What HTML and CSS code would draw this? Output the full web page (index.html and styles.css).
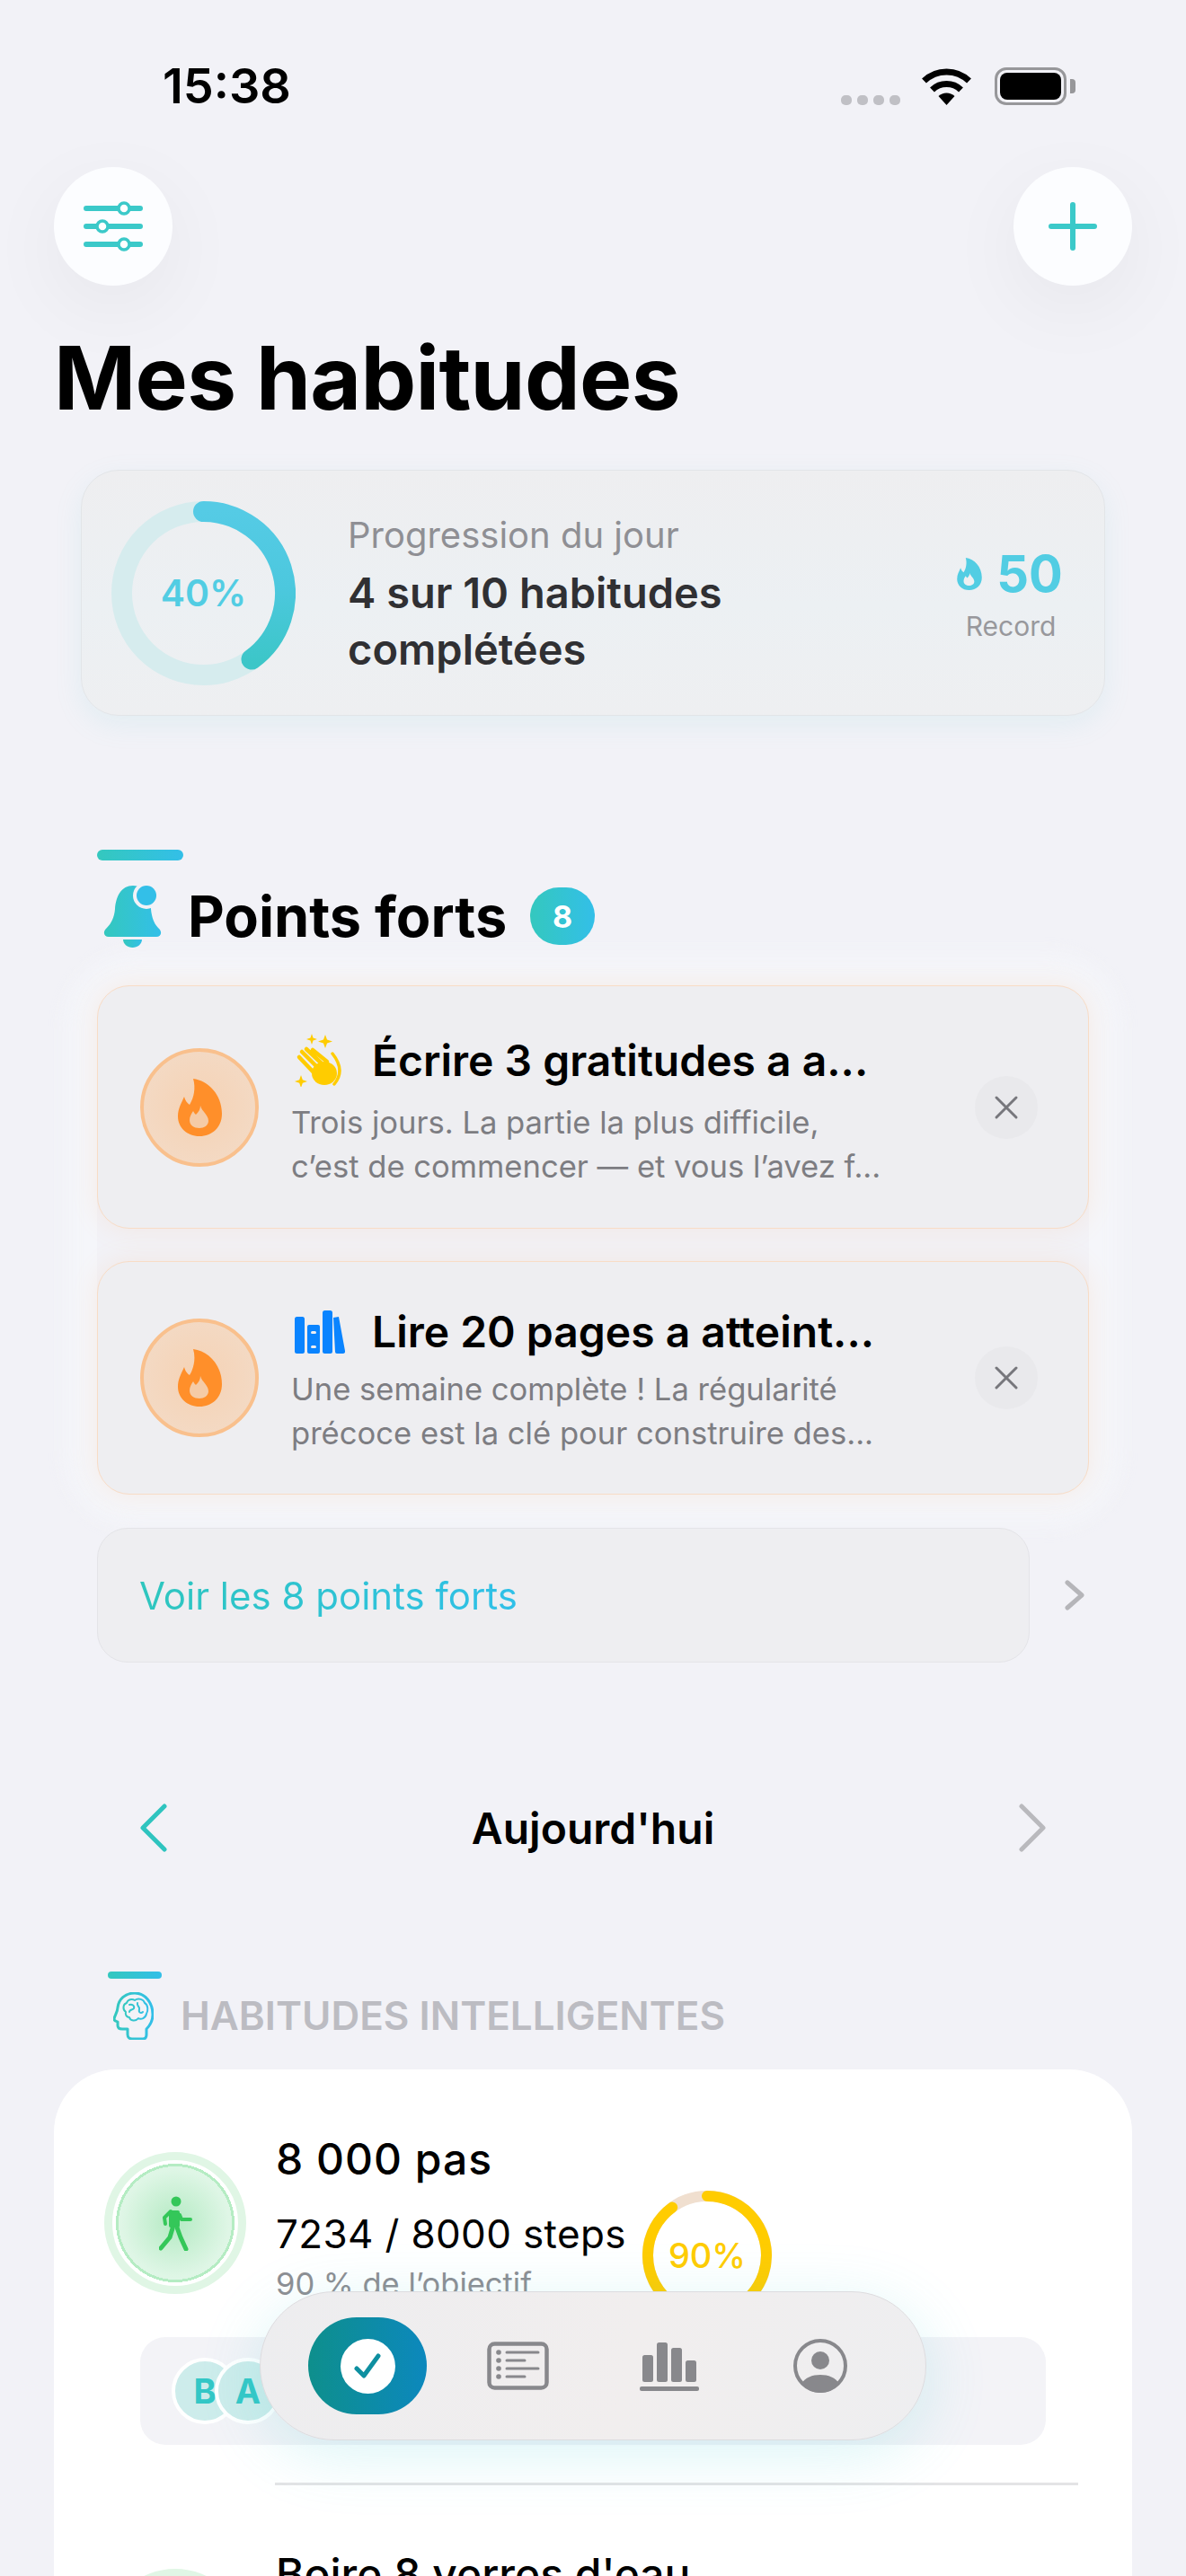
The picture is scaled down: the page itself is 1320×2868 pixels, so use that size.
FILE: index.html
```html
<!doctype html>
<html lang="fr">
<head>
    <meta charset="UTF-8">
    <title>Mes habitudes</title>
    <link rel="stylesheet" href="styles.css">
</head>
<body>
<svg class="defs" width="0" height="0">
    <defs>
        <linearGradient id="tealBlue" x1="0" y1="0" x2="1" y2="0">
            <stop offset="0" stop-color="#34c8be"/>
            <stop offset="1" stop-color="#33bfe8"/>
        </linearGradient>
        <linearGradient id="ringGrad" gradientUnits="userSpaceOnUse" x1="0" y1="10" x2="0" y2="180">
            <stop offset="0" stop-color="#55cbe5"/>
            <stop offset="0.5" stop-color="#4cc8de"/>
            <stop offset="1" stop-color="#3cc6c8"/>
        </linearGradient>
        <symbol id="flame" viewBox="0 0 49 64">
            <path fill="currentColor" d="M17 0C34 2 49 18 49 39C49 54 38 64 24 64C10 64 0 54 0 42C0 33 4 27 7 20C8 24 10 27 13 29C18 21 20 10 17 0Z"/>
            <path fill="var(--flame-in)" d="M25 30C27 37 34 40 34 47C34 52 29 55 24 55C18 55 13 52 13 46C13 42 15 39 17 36C18 38 19 39 20 40C23 37 25 34 25 30Z"/>
        </symbol>
    </defs>
</svg>

<div class="status">
    <span class="time">15:38</span>
    <div class="status-icons">
        <div class="signal"><i></i><i></i><i></i><i></i></div>
        <svg class="wifi" width="57" height="41" viewBox="0 0 57 41">
            <path d="M3.500 14A36 36 0 0 1 53.500 14" fill="none" stroke="#000" stroke-width="7"/>
            <path d="M12.500 24A23 23 0 0 1 44.500 24" fill="none" stroke="#000" stroke-width="7"/>
            <path d="M28.500 41L19.500 31A13 13 0 0 1 37.500 31Z"/>
        </svg>
        <div class="battery"><div class="battery-fill"></div></div>
    </div>
</div>

<div class="topbar">
    <button class="round-btn">
        <svg width="66" height="56" viewBox="0 0 66 56" fill="none" stroke="#3bc9c9">
            <g stroke-width="6" stroke-linecap="round">
                <path d="M3 8H63M3 28H63M3 48H63"/>
            </g>
            <g fill="#fff" stroke-width="3.500">
                <circle cx="45" cy="8" r="6"/>
                <circle cx="21" cy="28" r="6"/>
                <circle cx="45" cy="48" r="6"/>
            </g>
        </svg>
    </button>
    <button class="round-btn">
        <svg width="54" height="54" viewBox="0 0 54 54" fill="none" stroke="#3bc9c9" stroke-width="6" stroke-linecap="round">
            <path d="M27 3V51M3 27H51"/>
        </svg>
    </button>
</div>

<h1 class="page-title">Mes habitudes</h1>

<div class="progress-card">
    <div class="ring">
        <svg width="205" height="205" viewBox="0 0 205 205" fill="none">
            <circle cx="102.500" cy="102.500" r="91" stroke="#d6ecee" stroke-width="23"/>
            <path d="M102.500 11.500A91 91 0 0 1 156 176.100" stroke="url(#ringGrad)" stroke-width="23" stroke-linecap="round"/>
        </svg>
        <span class="ring-label">40%</span>
    </div>
    <div class="progress-text">
        <div class="progress-sub">Progression du jour</div>
        <div class="progress-main">4 sur 10 habitudes<br>complétées</div>
    </div>
    <div class="record">
        <div class="record-value">
            <svg class="record-flame" width="28" height="36"><use href="#flame"/></svg>
            <span>50</span>
        </div>
        <div class="record-label">Record</div>
    </div>
</div>

<section class="highlights">
    <div class="accent-bar"></div>
    <div class="hl-head">
        <svg width="65" height="70" viewBox="0 0 65 70">
            <path fill="url(#tealBlue)" d="M33 1C20 1 14 13 13 27C12 38 8 44 3 49C-1 53 1 58 6 58H59C64 58 66 53 62 49C57 44 54 38 53 27C52 13 46 1 33 1Z"/>
            <path fill="url(#tealBlue)" d="M22 61H43C43 66 38 70 32.500 70C27 70 22 66 22 61Z"/>
            <circle cx="48" cy="12" r="15" fill="#f2f2f7"/>
            <circle cx="48" cy="12" r="11" fill="#33bfe8"/>
        </svg>
        <h2 class="hl-title">Points forts</h2>
        <span class="count-badge">8</span>
    </div>

    <div class="hl-list">
        <div class="hl-card hl-card-first">
            <div class="flame-badge"><svg width="49" height="64"><use href="#flame"/></svg></div>
            <div class="hl-text">
                <div class="hl-card-head">
                    <svg width="56" height="59" viewBox="0 0 56 59" fill="none">
                        <g fill="#ffcc00">
                            <path d="M19 0L20.500 4.500L25 6L20.500 7.500L19 12L17.500 7.500L13 6L17.500 4.500Z"/>
                            <path d="M34 1L36 6.500L42 8.500L36 10.500L34 16L32 10.500L26 8.500L32 6.500Z"/>
                            <path d="M7 46L8.800 51.200L14 53L8.800 54.800L7 60L5.200 54.800L0 53L5.200 51.200Z"/>
                            <ellipse cx="33" cy="44" rx="14" ry="13"/>
                        </g>
                        <g stroke="#ffcc00" stroke-width="4.500" stroke-linecap="round">
                            <path d="M5 26L22 44M8 20L26 38M13 17L31 34M20 18L36 31"/>
                        </g>
                        <path d="M42 22C50 32 54 44 44 56" stroke="#ffcc00" stroke-width="3.500" stroke-linecap="round"/>
                    </svg>
                    <span class="hl-name">Écrire 3 gratitudes a a...</span>
                </div>
                <div class="hl-desc">Trois jours. La partie la plus difficile,<br>c’est de commencer — et vous l’avez f...</div>
            </div>
            <div class="close-btn">
                <svg width="28" height="28" viewBox="0 0 28 28" stroke="#77777c" stroke-width="3" stroke-linecap="round"><path d="M3 3L25 25M25 3L3 25"/></svg>
            </div>
        </div>

        <div class="hl-card hl-card-second">
            <div class="flame-badge"><svg width="49" height="64"><use href="#flame"/></svg></div>
            <div class="hl-text">
                <div class="hl-card-head">
                    <svg width="56" height="48" viewBox="0 0 56 48">
                        <g fill="#0a84ff">
                            <rect x="0" y="7" width="11" height="41" rx="2.500"/>
                            <path d="M16 16H26A2 2 0 0 1 28 18V46A2 2 0 0 1 26 48H16A2 2 0 0 1 14 46V18A2 2 0 0 1 16 16Z"/>
                            <rect x="31" y="0" width="11" height="48" rx="2.500"/>
                            <path d="M43 8L49 7L56 45A2.500 2.500 0 0 1 54 48H47A2 2 0 0 1 45 46Z"/>
                        </g>
                        <g fill="#eeeef1">
                            <rect x="18" y="23" width="6" height="3" rx="1.500"/>
                            <rect x="18" y="39" width="6" height="3" rx="1.500"/>
                        </g>
                    </svg>
                    <span class="hl-name">Lire 20 pages a atteint...</span>
                </div>
                <div class="hl-desc">Une semaine complète ! La régularité<br>précoce est la clé pour construire des...</div>
            </div>
            <div class="close-btn">
                <svg width="28" height="28" viewBox="0 0 28 28" stroke="#77777c" stroke-width="3" stroke-linecap="round"><path d="M3 3L25 25M25 3L3 25"/></svg>
            </div>
        </div>
    </div>

    <div class="see-all-row">
        <div class="see-all"><span>Voir les 8 points forts</span></div>
        <svg width="26" height="36" viewBox="0 0 26 36" fill="none" stroke="#b5b5b9" stroke-width="5" stroke-linecap="round" stroke-linejoin="round"><path d="M5 4L21 18L5 32"/></svg>
    </div>
</section>

<div class="date-nav">
    <svg width="32" height="54" viewBox="0 0 32 54" fill="none" stroke="#2fc4bf" stroke-width="5" stroke-linecap="round" stroke-linejoin="round"><path d="M28 3L4 27L28 51"/></svg>
    <span class="date-label">Aujourd'hui</span>
    <svg width="32" height="54" viewBox="0 0 32 54" fill="none" stroke="#b9b9bd" stroke-width="5" stroke-linecap="round" stroke-linejoin="round"><path d="M4 3L28 27L4 51"/></svg>
</div>

<section class="smart">
    <div class="accent-bar accent-bar-small"></div>
    <div class="smart-head">
        <svg width="45" height="53" viewBox="0 0 45 53" fill="none" stroke="url(#tealBlue)" stroke-width="3" stroke-linecap="round" stroke-linejoin="round">
            <path d="M16 41V47C16 50 18 52 21 52H33C36 52 37 50 37 47V41C41 37 44 32 44 25C44 11 35 1 24 1C13 1 6 8 5 17C5 22 1 27 1 30C1 32 3 32 5 33V37C5 40 7 41 10 41Z"/>
            <path stroke-width="2" d="M14 22C10 19 11 13 15 12C16 8 21 7 24 9C28 6 34 8 35 12C39 14 39 21 37 24C36 29 31 31 28 29C25 33 19 32 18 28C15 28 13 25 14 22ZM18 14C21 13 24 15 23 18C22 20 18 19 18 22M27 12C26 16 30 16 29 19C28 23 31 24 33 22"/>
        </svg>
        <h3 class="smart-title">HABITUDES INTELLIGENTES</h3>
    </div>

    <div class="smart-card">
        <div class="habit-row">
            <div class="habit-icon">
                <svg width="37" height="61" viewBox="0 0 37 61" fill="none" stroke="#34c759" stroke-linecap="round" stroke-linejoin="round">
                    <circle cx="19" cy="6" r="5.500" fill="#34c759" stroke="none"/>
                    <path d="M13 18H21L21 33L13 33Z" fill="#34c759" stroke-width="4"/>
                    <path d="M13 17L6 24L7 31" stroke-width="4"/>
                    <path d="M23 21L25 26H35" stroke-width="4"/>
                    <path d="M15 36L12 46L2 58" stroke-width="5"/>
                    <path d="M20 35L24 46L30 59" stroke-width="5"/>
                </svg>
            </div>
            <div class="habit-body">
                <div class="habit-name habit-name-first">8 000 pas</div>
                <div class="habit-metrics">
                    <div class="habit-values">
                        <div class="habit-steps">7234 / 8000 steps</div>
                        <div class="habit-goal">90 % de l’objectif</div>
                    </div>
                    <div class="goal-ring">
                        <svg width="144" height="144" viewBox="0 0 144 144" fill="none" stroke-width="12">
                            <circle cx="72" cy="72" r="66" stroke="#f0dfcf"/>
                            <path d="M72 6A66 66 0 1 1 33.200 18.600" stroke="#ffcc00" stroke-linecap="round"/>
                        </svg>
                        <span class="goal-label">90%</span>
                    </div>
                </div>
            </div>
        </div>
        <div class="friends-strip">
            <span class="avatar">B</span>
            <span class="avatar avatar-next">A</span>
        </div>
        <div class="habit-divider"></div>
        <div class="habit-row habit-row-next">
            <div class="habit-icon habit-icon-next"></div>
            <div class="habit-body">
                <div class="habit-name">Boire 8 verres d'eau</div>
            </div>
        </div>
    </div>
</section>

<nav class="tabbar">
    <div class="tab-active">
        <span class="tab-check">
            <svg width="30" height="28" viewBox="0 0 30 28" fill="none" stroke="#0e8fa0" stroke-width="5" stroke-linecap="round" stroke-linejoin="round"><path d="M3 17L11 25L27 3"/></svg>
        </span>
    </div>
    <svg class="tab-news" width="69" height="54" viewBox="0 0 69 54" fill="none" stroke="#88888c">
        <rect x="2.500" y="2.500" width="64" height="49" rx="6" stroke-width="4.500"/>
        <g stroke-width="3" stroke-linecap="round">
            <path d="M22 12H57M22 21H42M22 30H57M22 39H42"/>
        </g>
        <g fill="#88888c" stroke="none">
            <circle cx="13" cy="12" r="2.800"/><circle cx="13" cy="21" r="2.800"/><circle cx="13" cy="30" r="2.800"/><circle cx="13" cy="39" r="2.800"/>
        </g>
    </svg>
    <svg class="tab-chart" width="66" height="55" viewBox="0 0 66 55" fill="#88888c">
        <rect x="3" y="15" width="12" height="30" rx="2.500"/>
        <rect x="19" y="1" width="12" height="44" rx="2.500"/>
        <rect x="35" y="7" width="12" height="38" rx="2.500"/>
        <rect x="51" y="21" width="12" height="24" rx="2.500"/>
        <rect x="0" y="50" width="66" height="5" rx="2"/>
    </svg>
    <svg class="tab-profile" width="60" height="60" viewBox="0 0 60 60">
        <circle cx="30" cy="30" r="28" fill="none" stroke="#88888c" stroke-width="4"/>
        <circle cx="30" cy="24" r="10" fill="#88888c"/>
        <path fill="#88888c" d="M9 50C13 43 21 40 30 40C39 40 47 43 51 50C46 56 38 60 30 60C22 60 14 56 9 50Z"/>
    </svg>
</nav>
</body>
</html>
```

FILE: styles.css
```css
* {
    margin: 0;
    padding: 0;
    box-sizing: border-box;
}

body {
    width: 1320px;
    height: 2868px;
    overflow: hidden;
    position: relative;
    background: #f2f2f7;
    color: #000;
    font-family: Inter, "Noto Sans", sans-serif;
}

.defs {
    position: absolute;
}

svg {
    display: block;
    flex: none;
}

/* status bar */
.status {
    height: 186px;
    padding: 66px 133px 0 181px;
    display: flex;
    justify-content: space-between;
    align-items: flex-start;
}

.time {
    font-size: 54px;
    line-height: 60px;
    font-weight: 600;
}

.status-icons {
    display: flex;
    align-items: flex-end;
    padding-top: 9px;
}

.signal {
    display: flex;
    gap: 6px;
    margin-right: 23px;
}

.signal i {
    width: 12px;
    height: 11px;
    border-radius: 5px;
    background: #c0c0c5;
}

.wifi {
    margin-right: 25px;
}

.battery {
    width: 80px;
    height: 42px;
    border: 3px solid #97979a;
    border-radius: 13px;
    padding: 3px;
    position: relative;
}

.battery::after {
    content: "";
    position: absolute;
    right: -13px;
    top: 10px;
    width: 6px;
    height: 16px;
    border-radius: 0 4px 4px 0;
    background: #97979a;
}

.battery-fill {
    height: 100%;
    background: #000;
    border-radius: 8px;
}

/* top buttons */
.topbar {
    display: flex;
    justify-content: space-between;
    padding: 0 60px;
}

.round-btn {
    width: 132px;
    height: 132px;
    border: 0;
    border-radius: 50%;
    background: #fcfdff;
    box-shadow: 0 24px 90px rgba(0, 0, 0, .05);
    display: flex;
    align-items: center;
    justify-content: center;
}

.page-title {
    margin: 53px 0 52px 60px;
    font-size: 98px;
    line-height: 100px;
    font-weight: 700;
    letter-spacing: -.7px;
}

/* progress card */
.progress-card {
    margin: 0 90px;
    height: 274px;
    padding-left: 33px;
    display: flex;
    align-items: center;
    border: 1.500px solid #e2e5e8;
    border-radius: 42px;
    background: linear-gradient(180deg, #eeeef0, #ecf0f3 55%, #eeeff1);
    box-shadow: 0 10px 30px rgba(120, 210, 215, .13);
}

.ring {
    width: 205px;
    height: 205px;
    position: relative;
    flex: none;
}

.ring-label {
    position: absolute;
    inset: 0;
    display: flex;
    align-items: center;
    justify-content: center;
    font-size: 41px;
    font-weight: 600;
    color: #52cde3;
}

.progress-text {
    margin-left: 58px;
    padding-top: 6px;
    flex: 1;
}

.progress-sub {
    font-size: 40px;
    line-height: 48px;
    color: #8f8f94;
}

.progress-main {
    margin-top: 8px;
    font-size: 47px;
    line-height: 63px;
    font-weight: 600;
    color: #303033;
}

.record {
    width: 116px;
    margin-right: 46px;
    padding-top: 2px;
    display: flex;
    flex-direction: column;
    align-items: center;
}

.record-value {
    display: flex;
    align-items: center;
    gap: 16px;
    font-size: 56px;
    line-height: 64px;
    font-weight: 700;
    color: #52cde3;
    --flame-in: #eef0f2;
    margin-right: 2px;
    white-space: nowrap;
}

.record-label {
    margin-top: 8px;
    font-size: 30px;
    line-height: 36px;
    color: #98989c;
}

/* highlights */
.highlights {
    margin: 149px 108px 0;
}

.accent-bar {
    width: 96px;
    height: 12px;
    border-radius: 6px;
    background: linear-gradient(90deg, #34c8be, #33bfe8);
}

.hl-head {
    margin-top: 26px;
    height: 72px;
    padding-left: 7px;
    display: flex;
    align-items: center;
}

.hl-title {
    margin-left: 29px;
    font-size: 63px;
    line-height: 72px;
    font-weight: 700;
}

.count-badge {
    margin-left: 26px;
    width: 72px;
    height: 64px;
    border-radius: 32px;
    background: linear-gradient(90deg, #34c8be, #33bfe8);
    color: #fff;
    font-size: 34px;
    font-weight: 700;
    display: flex;
    align-items: center;
    justify-content: center;
}

.hl-list {
    margin-top: 41px;
    border-radius: 40px;
    display: flex;
    flex-direction: column;
    gap: 36px;
    box-shadow: 0 0 24px 34px rgba(247, 249, 252, .6);
}

.hl-card {
    padding-left: 47px;
    padding-right: 56px;
    display: flex;
    align-items: center;
    border: 1.500px solid #f8dcc6;
    border-radius: 36px;
    background: #eeeef1;
    box-shadow: 0 0 30px rgba(255, 170, 100, .14);
}

.hl-card-first {
    height: 271px;
}

.hl-card-second {
    height: 260px;
}

.flame-badge {
    width: 132px;
    height: 132px;
    border-radius: 50%;
    border: 4px solid #f9c08d;
    background: radial-gradient(circle, #f5d2b4, #f3dcc9);
    color: #ff8f2a;
    --flame-in: #f5cba6;
    display: flex;
    align-items: center;
    justify-content: center;
    flex: none;
}

.hl-text {
    margin-left: 36px;
    flex: 1;
    align-self: flex-start;
    white-space: nowrap;
}

.hl-card-first .hl-text {
    padding-top: 53px;
}

.hl-card-second .hl-text {
    padding-top: 50px;
}

.hl-card-head {
    margin-left: 4px;
    display: flex;
    align-items: center;
    gap: 30px;
}

.hl-name {
    font-size: 48px;
    line-height: 56px;
    font-weight: 600;
}

.hl-desc {
    padding-top: 1px;
    font-size: 34.600px;
    line-height: 49px;
    color: #7d7d82;
}

.hl-card-first .hl-desc {
    margin-top: 14px;
}

.hl-card-second .hl-desc {
    margin-top: 10px;
}

.close-btn {
    width: 70px;
    height: 70px;
    margin-left: 3px;
    border-radius: 50%;
    background: #e9e9ec;
    display: flex;
    align-items: center;
    justify-content: center;
    flex: none;
}

.see-all-row {
    margin-top: 37px;
    display: flex;
    align-items: center;
    gap: 37px;
}

.see-all {
    width: 1038px;
    height: 150px;
    padding-left: 46px;
    display: flex;
    align-items: center;
    border: 1.500px solid #e4e4e8;
    border-radius: 34px;
    background: #eeeef1;
    font-size: 42px;
}

.see-all span {
    background: linear-gradient(90deg, #2ec6be, #2fc0e8);
    -webkit-background-clip: text;
    background-clip: text;
    color: transparent;
}

/* date nav */
.date-nav {
    margin-top: 154px;
    height: 60px;
    padding: 0 155px;
    display: flex;
    align-items: center;
    justify-content: space-between;
}

.date-label {
    font-size: 48px;
    font-weight: 600;
}

/* smart habits */
.smart {
    margin-top: 130px;
}

.accent-bar-small {
    margin-left: 120px;
    width: 60px;
    height: 8px;
    border-radius: 4px;
}

.smart-head {
    margin: 15px 0 33px 126px;
    height: 53px;
    display: flex;
    align-items: center;
    gap: 30px;
}

.smart-title {
    font-size: 44px;
    line-height: 53px;
    font-weight: 600;
    color: #bcbcc2;
}

.smart-card {
    margin: 0 60px;
    height: 700px;
    padding-top: 72px;
    border-radius: 70px;
    background: #fff;
}

.habit-row {
    padding-left: 56px;
    display: flex;
    align-items: flex-start;
}

.habit-icon {
    margin-top: 20px;
    width: 158px;
    height: 158px;
    border-radius: 50%;
    border: 9px solid #e0f6e5;
    display: flex;
    align-items: center;
    justify-content: center;
    background: radial-gradient(circle closest-side, #b4eac3 0, #dff6e6 60px, #dff6e6 63px, #b5ecc3 63px, #b5ecc3 66px, #fff 66px);
    flex: none;
}

.habit-body {
    margin-left: 33px;
}

.habit-name {
    font-size: 48px;
    line-height: 56px;
    font-weight: 500;
}

.habit-name-first {
    letter-spacing: 1px;
}

.habit-metrics {
    margin-top: 7px;
    display: flex;
    align-items: flex-start;
    gap: 22px;
}

.habit-values {
    width: 386px;
    padding-top: 21px;
    white-space: nowrap;
}

.habit-steps {
    font-size: 44px;
    line-height: 54px;
    letter-spacing: .35px;
}

.habit-goal {
    margin-top: 7px;
    font-size: 34.500px;
    line-height: 44px;
    color: #8e8e93;
}

.goal-ring {
    width: 144px;
    height: 144px;
    position: relative;
    flex: none;
}

.goal-label {
    position: absolute;
    inset: 0;
    display: flex;
    align-items: center;
    justify-content: center;
    font-size: 38px;
    font-weight: 500;
    color: #ffcc00;
}

.friends-strip {
    margin: 19px 0 0 96px;
    width: 1008px;
    height: 120px;
    padding-left: 35px;
    display: flex;
    align-items: center;
    border-radius: 28px;
    background: #f3f3f7;
}

.avatar {
    width: 74px;
    height: 74px;
    border-radius: 50%;
    border: 4px solid #fff;
    background: #cdeceb;
    color: #33c7c6;
    font-size: 38px;
    font-weight: 700;
    display: flex;
    align-items: center;
    justify-content: center;
}

.avatar-next {
    margin-left: -26px;
}

.habit-divider {
    margin: 42px 0 0 246px;
    width: 894px;
    height: 3px;
    background: #e4e4e6;
}

.habit-row-next {
    margin-top: 71px;
}

.habit-icon-next {
    margin-top: 22px;
}

/* floating tab bar */
.tabbar {
    position: absolute;
    left: 289px;
    top: 2551px;
    width: 742px;
    height: 166px;
    padding-left: 53px;
    display: flex;
    align-items: center;
    border: 1.500px solid #dcdcdf;
    border-radius: 83px;
    background: linear-gradient(100deg, #ededef, #f1eeee 55%, #eeeef0);
    box-shadow: 0 15px 70px rgba(70, 205, 215, .2);
}

.tab-active {
    width: 132px;
    height: 108px;
    border-radius: 54px;
    background: linear-gradient(90deg, #0e8f8c, #0c88bd);
    display: flex;
    align-items: center;
    justify-content: center;
    flex: none;
}

.tab-check {
    width: 61px;
    height: 61px;
    border-radius: 50%;
    background: #fff;
    display: flex;
    align-items: center;
    justify-content: center;
}

.tab-news {
    margin-left: 67px;
}

.tab-chart {
    margin-left: 101px;
}

.tab-profile {
    margin-left: 105px;
}
```
